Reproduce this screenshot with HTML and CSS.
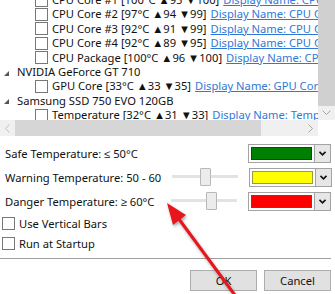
FILE: index.html
```html
<!DOCTYPE html>
<html lang="en">
<head>
  <meta charset="UTF-8" />
  <title>Options</title>
  <link rel="stylesheet" href="styles.css">
</head>
<body>
  <div class="window">
    <div class="tree">
      <div class="tree-view">
        <div class="tree-rows">
          <div class="row child"><span class="check"></span><span class="label">CPU Core #1 [100°C ▲95 ▼100]</span><a class="name">Display Name: CPU Core #1</a></div>
          <div class="row child"><span class="check"></span><span class="label">CPU Core #2 [97°C ▲94 ▼99]</span><a class="name">Display Name: CPU Core #2</a></div>
          <div class="row child"><span class="check"></span><span class="label">CPU Core #3 [92°C ▲91 ▼99]</span><a class="name">Display Name: CPU Core #3</a></div>
          <div class="row child"><span class="check"></span><span class="label">CPU Core #4 [92°C ▲89 ▼95]</span><a class="name">Display Name: CPU Core #4</a></div>
          <div class="row child"><span class="check"></span><span class="label">CPU Package [100°C ▲96 ▼100]</span><a class="name">Display Name: CPU Package</a></div>
          <div class="row group"><span class="expander"></span><span class="label">NVIDIA GeForce GT 710</span></div>
          <div class="row child"><span class="check"></span><span class="label">GPU Core [33°C ▲33 ▼35]</span><a class="name">Display Name: GPU Core</a></div>
          <div class="row group"><span class="expander"></span><span class="label">Samsung SSD 750 EVO 120GB</span></div>
          <div class="row child"><span class="check"></span><span class="label">Temperature [32°C ▲31 ▼33]</span><a class="name">Display Name: Temperature</a></div>
        </div>
      </div>
      <div class="vscroll">
        <div class="vthumb"></div>
        <div class="arrow-box">
          <svg width="9" height="6" viewBox="0 0 9 6"><polyline points="0.5,0.5 4.5,4.5 8.5,0.5" fill="none" stroke="#a6a6a6" stroke-width="1"/></svg>
        </div>
      </div>
      <div class="hscroll">
        <div class="arrow-box">
          <svg width="6" height="9" viewBox="0 0 6 9"><polyline points="4.5,0.5 0.5,4.5 4.5,8.5" fill="none" stroke="#bfbfbf" stroke-width="1"/></svg>
        </div>
        <div class="hthumb"></div>
        <div class="hspace"></div>
        <div class="arrow-box">
          <svg width="6" height="9" viewBox="0 0 6 9"><polyline points="0.5,0.5 4.5,4.5 0.5,8.5" fill="none" stroke="#a6a6a6" stroke-width="1"/></svg>
        </div>
      </div>
      <div class="corner"></div>
    </div>

    <div class="settings">
      <div class="setting">
        <span class="setting-label">Safe Temperature: ≤ 50°C</span>
        <span class="slider-empty"></span>
        <div class="combo"><div class="combo-field"><span class="swatch green"></span></div><div class="combo-btn"><svg width="7" height="5" viewBox="0 0 7 5"><polyline points="0.5,0.8 3.5,3.8 6.5,0.8" fill="none" stroke="#111" stroke-width="1.6"/></svg></div></div>
      </div>
      <div class="setting">
        <span class="setting-label">Warning Temperature: 50 - 60</span>
        <div class="slider"><span class="track"></span><span class="thumb" style="left: 28px"></span></div>
        <div class="combo"><div class="combo-field"><span class="swatch yellow"></span></div><div class="combo-btn"><svg width="7" height="5" viewBox="0 0 7 5"><polyline points="0.5,0.8 3.5,3.8 6.5,0.8" fill="none" stroke="#111" stroke-width="1.6"/></svg></div></div>
      </div>
      <div class="setting">
        <span class="setting-label">Danger Temperature: ≥ 60°C</span>
        <div class="slider"><span class="track"></span><span class="thumb" style="left: 35px"></span></div>
        <div class="combo"><div class="combo-field"><span class="swatch red"></span></div><div class="combo-btn"><svg width="7" height="5" viewBox="0 0 7 5"><polyline points="0.5,0.8 3.5,3.8 6.5,0.8" fill="none" stroke="#111" stroke-width="1.6"/></svg></div></div>
      </div>
    </div>

    <div class="options">
      <label class="option"><span class="check"></span>Use Vertical Bars</label>
      <label class="option"><span class="check"></span>Run at Startup</label>
    </div>

    <div class="separator"></div>

    <div class="buttons">
      <button class="btn">OK</button>
      <button class="btn">Cancel</button>
    </div>

    <svg class="annotation" width="335" height="294" viewBox="0 0 335 294">
      <g class="arrow">
        <line x1="237" y1="298" x2="176" y2="215" stroke="#e8161c" stroke-width="3" stroke-linecap="round"/>
        <polygon points="167,203 186,215 173,225" fill="#e8161c"/>
      </g>
    </svg>
  </div>
</body>
</html>
```

FILE: styles.css
```css
body {
  margin: 0;
  background: #fff;
  font-family: 'Noto Sans', sans-serif;
  font-size: 11.2px;
  color: #111;
}

.window {
  position: relative;
  width: 335px;
  height: 294px;
  overflow: hidden;
}

/* sensor tree */

.tree {
  display: grid;
  grid-template-columns: 318px 17px;
  grid-template-rows: 120px 16px;
  height: 136px;
}

.tree-view {
  overflow: hidden;
}

.tree-rows {
  margin-top: -7px;
}

.row {
  display: flex;
  align-items: center;
  height: 14.4px;
  line-height: 14.4px;
  white-space: nowrap;
}

.row.child {
  padding-left: 35px;
}

.row.group {
  padding-left: 4px;
}

.check {
  display: inline-block;
  flex: none;
  width: 11px;
  height: 11px;
  border: 1px solid #777;
  background: #fff;
  margin-right: 4px;
}

.expander {
  width: 0;
  height: 0;
  border-left: 5px solid transparent;
  border-bottom: 5px solid #555;
  margin-right: 8px;
  margin-top: 2px;
}

.name {
  margin-left: 4px;
  color: #2f78d6;
  text-decoration: underline;
}

.vscroll {
  display: flex;
  flex-direction: column;
  background: #f0f0f0;
}

.vthumb {
  height: 106px;
  background: #d0d0d0;
}

.arrow-box {
  flex: 1;
  display: flex;
  align-items: center;
  justify-content: center;
}

.hscroll {
  display: flex;
  background: #f0f0f0;
}

.hscroll .arrow-box {
  flex: none;
  width: 15px;
}

.hthumb {
  width: 246px;
  background: #d6d6d6;
}

.hspace {
  flex: 1;
}

.corner {
  background: #fff;
}

/* temperature settings */

.settings {
  padding-top: 5px;
}

.setting {
  display: grid;
  grid-template-columns: 1fr 66px 83px;
  column-gap: 11px;
  align-items: center;
  height: 24px;
  padding: 0 4px 0 5px;
}

.setting-label {
  white-space: nowrap;
}

.slider {
  position: relative;
  height: 18px;
}

.track {
  position: absolute;
  left: 0;
  right: 0;
  top: 7px;
  height: 3px;
  background: #e3e3e3;
}

.thumb {
  position: absolute;
  top: 0;
  width: 9px;
  height: 16px;
  background: #ececec;
  border: 1px solid #b8b8b8;
  border-radius: 1px;
}

.combo {
  display: flex;
  height: 19px;
}

.combo-field {
  flex: 1;
  display: flex;
  padding: 2px;
  border: 1px solid #a3a3a3;
  background: #fff;
}

.swatch {
  flex: 1;
  border: 1px solid #555;
}

.swatch.green {
  background: #008000;
  border-color: #0b4d0b;
}

.swatch.yellow {
  background: #ffff00;
  border-color: #9a9a40;
}

.swatch.red {
  background: #ff0000;
  border-color: #a03030;
}

.combo-btn {
  width: 15px;
  display: flex;
  align-items: center;
  justify-content: center;
  background: #e6e6e6;
  border: 1px solid #a3a3a3;
  border-left: none;
}

/* options */

.options {
  padding-left: 2px;
}

.option {
  display: flex;
  align-items: center;
  height: 20px;
}

.option .check {
  margin-right: 4px;
}

.separator {
  margin: 5px 4px 0 0;
  height: 1px;
  background: #a0a0a0;
}

.buttons {
  display: flex;
  justify-content: flex-end;
  gap: 7px;
  padding: 11px 4px 0 0;
}

.btn {
  width: 67px;
  height: 21px;
  padding: 0;
  background: #e1e1e1;
  border: 1px solid #adadad;
  font-family: 'Noto Sans', sans-serif;
  font-size: 11.2px;
  color: #111;
}

.annotation {
  position: absolute;
  left: 0;
  top: 0;
  pointer-events: none;
}

.arrow {
  filter: drop-shadow(1px 2px 1.5px rgba(0, 0, 0, 0.35));
}
```
